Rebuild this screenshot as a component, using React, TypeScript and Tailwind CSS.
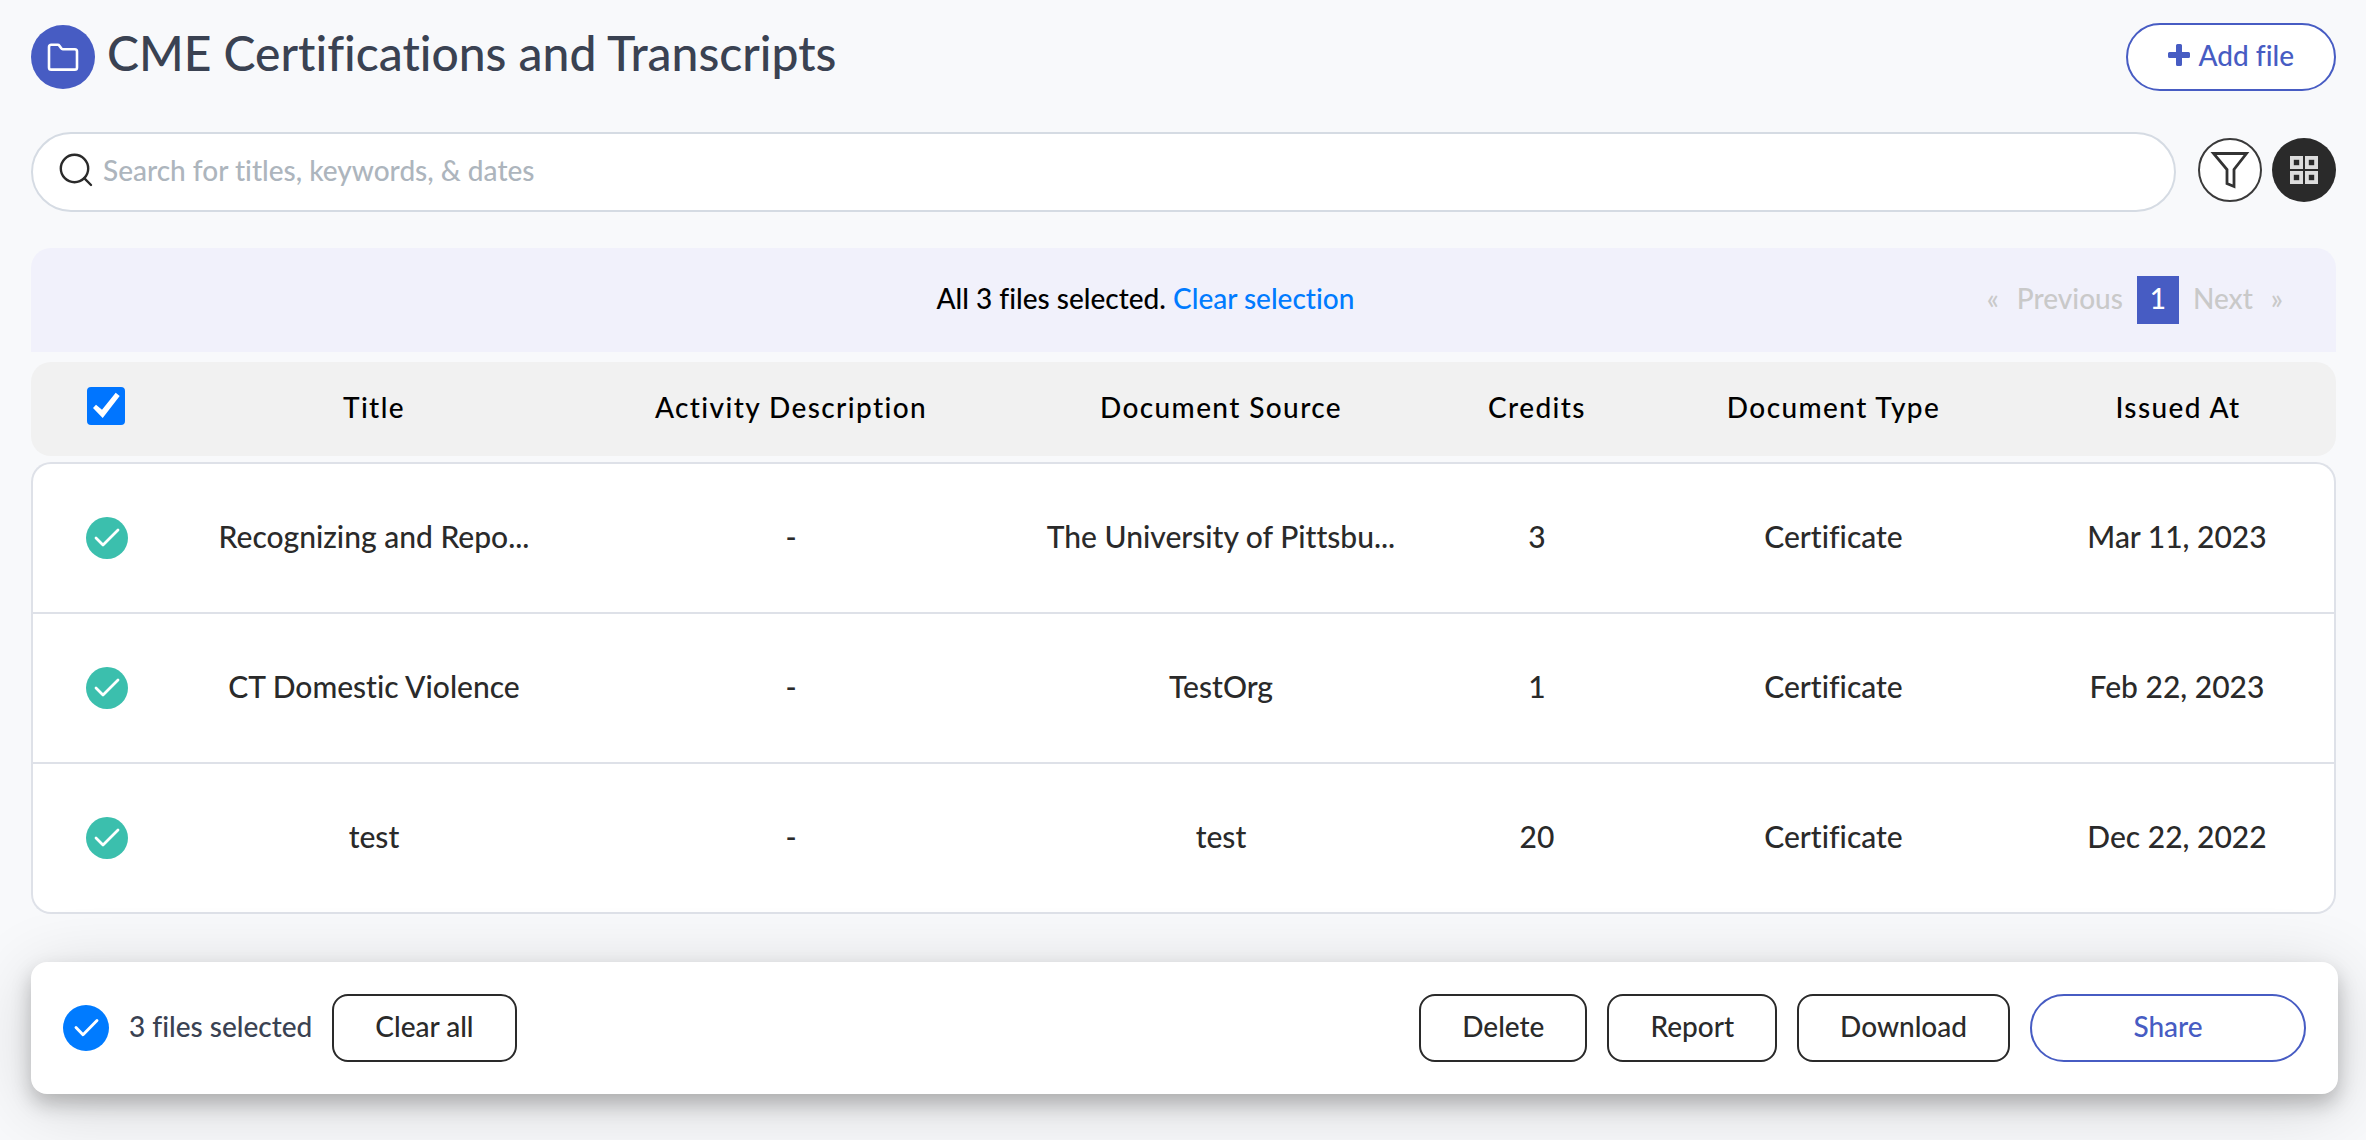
import type { ReactNode } from "react";

type FileRow = {
  title: string;
  description: string;
  source: string;
  credits: number;
  type: string;
  issued: string;
};

const files: FileRow[] = [
  { title: "Recognizing and Repo...", description: "-", source: "The University of Pittsbu...", credits: 3, type: "Certificate", issued: "Mar 11, 2023" },
  { title: "CT Domestic Violence", description: "-", source: "TestOrg", credits: 1, type: "Certificate", issued: "Feb 22, 2023" },
  { title: "test", description: "-", source: "test", credits: 20, type: "Certificate", issued: "Dec 22, 2022" },
];

const headings = ["Title", "Activity Description", "Document Source", "Credits", "Document Type", "Issued At"];

function FolderIcon() {
  return (
    <svg viewBox="0 0 32 32" className="size-8" fill="none" stroke="white" strokeWidth="2.6" strokeLinejoin="round" aria-hidden="true">
      <path d="M4.2 3.800h6.600c.7 0 1.200.300 1.600.900l1.800 2.600c.4.600.900.900 1.600.900h12c1.300 0 2.200.900 2.200 2.200v16c0 1.300-.900 2.200-2.200 2.200H4.200c-1.300 0-2.200-.900-2.200-2.200V6c0-1.300.900-2.200 2.200-2.200z" />
    </svg>
  );
}

function SearchIcon() {
  return (
    <svg viewBox="0 0 34 34" className="size-[34px] shrink-0" fill="none" stroke="#2a2a2a" strokeWidth="2.4" strokeLinecap="round" aria-hidden="true">
      <circle cx="15.500" cy="15.500" r="13.700" />
      <path d="M25.200 25.200 32 32" />
    </svg>
  );
}

function PlusIcon() {
  return (
    <svg viewBox="0 0 22 22" className="size-[22px]" fill="currentColor" aria-hidden="true">
      <path d="M9.500 0h3A1.500 1.500 0 0 1 14 1.500V8h6.500A1.500 1.500 0 0 1 22 9.500v3a1.500 1.500 0 0 1-1.500 1.500H14v6.500a1.500 1.500 0 0 1-1.500 1.500h-3A1.500 1.500 0 0 1 8 20.500V14H1.500A1.500 1.500 0 0 1 0 12.500v-3A1.500 1.500 0 0 1 1.500 8H8V1.500A1.500 1.500 0 0 1 9.500 0z" />
    </svg>
  );
}

function FilterIcon() {
  return (
    <svg viewBox="0 0 64 64" className="size-16" aria-hidden="true">
      <circle cx="32" cy="32" r="31" fill="white" stroke="#3a3a3a" strokeWidth="2" />
      <path d="M15.500 15.500h33L36 31.500v17l-7-3v-14z" fill="none" stroke="#333" strokeWidth="2.800" />
    </svg>
  );
}

function GridIcon() {
  return (
    <svg viewBox="0 0 64 64" className="size-16" aria-hidden="true">
      <circle cx="32" cy="32" r="32" fill="#2a2a2a" />
      <g fill="none" stroke="#dcdcdc" strokeWidth="3.800">
        <rect x="19.900" y="19.900" width="9.200" height="9.200" />
        <rect x="34.900" y="19.900" width="9.200" height="9.200" />
        <rect x="19.900" y="34.900" width="9.200" height="9.200" />
        <rect x="34.900" y="34.900" width="9.200" height="9.200" />
      </g>
    </svg>
  );
}

function RowCheck() {
  return (
    <svg viewBox="0 0 42 42" className="mx-auto size-[42px]" aria-hidden="true">
      <circle cx="21" cy="21" r="21" fill="#3bbfad" />
      <path d="M10 21l7 7L32 13" fill="none" stroke="white" strokeWidth="2.800" strokeLinecap="round" strokeLinejoin="round" />
    </svg>
  );
}

function SelectedCheck() {
  return (
    <svg viewBox="0 0 46 46" className="size-[46px]" aria-hidden="true">
      <circle cx="23" cy="23" r="23" fill="#007bff" />
      <path d="M13 22.500l7 7.200L34 15.500" fill="none" stroke="white" strokeWidth="2.900" strokeLinecap="round" strokeLinejoin="round" />
    </svg>
  );
}

function OutlineButton({ children }: { children: ReactNode }) {
  return (
    <button type="button" className="h-[68px] rounded-2xl border-2 border-[#2a2a2a] bg-white px-[41px] pb-1 text-[#2a2a2a]">
      {children}
    </button>
  );
}

export default function App() {
  return (
    <main className="min-h-screen overflow-hidden bg-[#f8f9fb] pt-[23px] pr-[30px] pb-[46px] pl-[31px] font-['Lato',sans-serif] text-[28px] leading-[42px] font-medium [font-variant-ligatures:no-common-ligatures]">
      <header className="flex items-center justify-between">
        <div className="flex items-center gap-3">
          <span className="flex size-16 items-center justify-center rounded-full bg-[#475cc3]">
            <FolderIcon />
          </span>
          <h1 className="pb-2 text-[48px] leading-[60px] text-[#3a4252]">CME Certifications and Transcripts</h1>
        </div>
        <button type="button" className="flex h-[68px] items-center gap-2 rounded-full border-2 border-[#475cc3] bg-white px-10 pb-1 text-[#475cc3]">
          <PlusIcon />
          Add file
        </button>
      </header>

      <div className="mt-[41px] flex items-center">
        <label className="flex h-20 flex-1 items-center gap-[10px] rounded-full border-2 border-[#d5dbe3] bg-white pr-8 pb-1 pl-[26px]">
          <SearchIcon />
          <input
            type="search"
            aria-label="Search files"
            placeholder="Search for titles, keywords, & dates"
            className="w-full bg-transparent outline-none placeholder:text-[#adb5bd]"
          />
        </label>
        <button type="button" aria-label="Filter" className="mb-1 ml-[22px] rounded-full">
          <FilterIcon />
        </button>
        <button type="button" aria-label="Grid view" className="mb-1 ml-[10px] rounded-full">
          <GridIcon />
        </button>
      </div>

      <section className="mt-9 grid h-[104px] grid-cols-[1fr_auto_1fr] items-center rounded-t-[20px] bg-[#f1f1fb] pr-[44px]">
        <p className="col-start-2 pr-8 pb-1 text-black">
          All 3 files selected.{" "}
          <a href="#clear" className="text-[#007bff]">Clear selection</a>
        </p>
        <nav aria-label="Pagination" className="flex items-center justify-end text-[#c9c9c9]">
          <button type="button" aria-label="First page" className="px-[9px] pb-1">«</button>
          <button type="button" className="px-[9px] pb-1">Previous</button>
          <button type="button" aria-current="page" className="mx-[5px] h-12 w-[42px] bg-[#475cc3] pb-1 text-white">1</button>
          <button type="button" className="px-[9px] pb-1">Next</button>
          <button type="button" aria-label="Last page" className="px-[9px] pb-1">»</button>
        </nav>
      </section>

      <table className="mt-[10px] w-full table-fixed border-separate border-spacing-0 text-center">
        <colgroup>
          <col className="w-[150px]" />
          <col className="w-[386px]" />
          <col className="w-[448px]" />
          <col className="w-[412px]" />
          <col className="w-[220px]" />
          <col className="w-[373px]" />
          <col className="w-[316px]" />
        </colgroup>
        <thead>
          <tr className="h-[94px] text-black *:bg-[#f1f1f1] *:font-medium">
            <th className="rounded-l-[20px] pb-[6px]">
              <span className="relative mx-auto block size-[38px]">
                <input
                  type="checkbox"
                  defaultChecked
                  aria-label="Select all files"
                  className="peer block size-full appearance-none rounded-[4px] border-2 border-gray-400 bg-white checked:border-[#0075ff] checked:bg-[#0075ff]"
                />
                <svg viewBox="0 0 38 38" className="pointer-events-none absolute inset-0 hidden size-full peer-checked:block" fill="white" aria-hidden="true">
                  <path d="M6 21l3-3.200 6 5L28.700 5.800l4 3.200L15.700 31z" />
                </svg>
              </span>
            </th>
            {headings.map((heading) => (
              <th key={heading} className="pb-1 tracking-wider last:rounded-r-[20px]">
                {heading}
              </th>
            ))}
          </tr>
        </thead>
        <tbody className="text-[30px] text-[#2a2a2a] before:block before:h-[6px] before:content-['']">
          {files.map((file) => (
            <tr
              key={file.title}
              className="h-[150px] *:border-b-2 *:border-[#dee1e8] *:bg-white *:not-first:pb-1 *:first:border-l-2 first:h-[152px] first:*:border-t-2 first:*:first:rounded-tl-[20px] first:*:last:rounded-tr-[20px] last:*:first:rounded-bl-[20px] last:*:last:rounded-br-[20px] *:last:border-r-2"
            >
              <td>
                <RowCheck />
              </td>
              <td>{file.title}</td>
              <td>{file.description}</td>
              <td>{file.source}</td>
              <td>{file.credits}</td>
              <td>{file.type}</td>
              <td>{file.issued}</td>
            </tr>
          ))}
        </tbody>
      </table>

      <footer className="mt-12 -mr-0.5 flex h-[132px] items-center justify-between rounded-2xl bg-white px-8 shadow-[0_12px_70px_rgba(0,0,0,0.16),0_10px_20px_rgba(0,0,0,0.22)]">
        <div className="flex items-center gap-5">
          <SelectedCheck />
          <span className="pb-1 text-[#3a4252]">3 files selected</span>
          <OutlineButton>Clear all</OutlineButton>
        </div>
        <div className="flex items-center gap-5">
          <OutlineButton>Delete</OutlineButton>
          <OutlineButton>Report</OutlineButton>
          <OutlineButton>Download</OutlineButton>
          <button type="button" className="h-[68px] w-[276px] rounded-full border-2 border-[#475cc3] bg-white pb-1 text-[#475cc3]">
            Share
          </button>
        </div>
      </footer>
    </main>
  );
}
